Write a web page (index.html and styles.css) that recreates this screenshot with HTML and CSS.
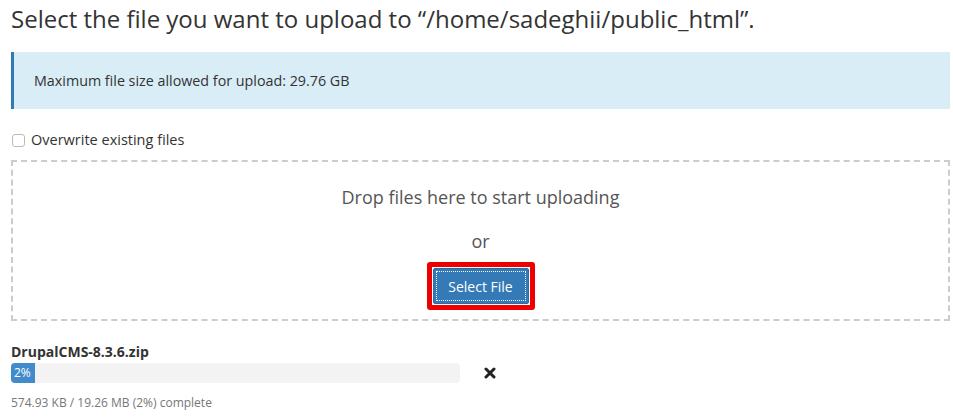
FILE: index.html
```html
<!DOCTYPE html>
<html>
<head>
<meta charset="utf-8">
<link rel="stylesheet" href="styles.css">
</head>
<body>
<div class="page">
  <h1 class="title">Select the file you want to upload to “/home/sadeghii/public_html”.</h1>
  <div class="info">Maximum file size allowed for upload: 29.76 GB</div>
  <label class="overwrite"><span class="checkbox"></span>Overwrite existing files</label>
  <div class="dropzone">
    <div class="drop-text">Drop files here to start uploading</div>
    <div class="or">or</div>
    <div class="highlight"><button class="select-btn"><span class="focus">Select File</span></button></div>
  </div>
  <div class="file">
    <div class="file-name">DrupalCMS-8.3.6.zip</div>
    <div class="progress-row">
      <div class="progress"><div class="bar" style="width:24px">2%</div></div>
      <svg class="cancel" width="12" height="12" viewBox="0 0 12 12"><path d="M2 2 L10 10 M10 2 L2 10" stroke="#222" stroke-width="3" stroke-linecap="round"/></svg>
    </div>
    <div class="status">574.93 KB / 19.26 MB (2%) complete</div>
  </div>
</div>
</body>
</html>
```
FILE: styles.css
```css
html, body { margin: 0; padding: 0; background: #fff; }
body { font-family: "Open Sans", "DejaVu Sans", sans-serif; color: #333; }
.page { padding: 0 3px 0 11px; }
.title { font-size: 24px; font-weight: 400; margin: 0; padding-top: 3px; line-height: 32px; color: #333; }
.info { margin-top: 17px; height: 57px; box-sizing: border-box; background: #d9edf7; border-left: 3px solid #2e7bb6; padding-left: 20px; font-size: 14.3px; display: flex; align-items: center; }
.overwrite { display: flex; align-items: center; margin-top: 22px; font-size: 14.5px; line-height: 20px; height: 18px; }
.checkbox { border: 1px solid #bbb; border-radius: 3px; margin-left: 1px; margin-right: 6px; background: #fff; box-sizing: border-box; width: 13px; height: 13px; }
.dropzone { margin-top: 11px; height: 161px; box-sizing: border-box; border: 2px dashed #ccc; display: flex; flex-direction: column; align-items: center; }
.drop-text { font-size: 18px; color: #555; margin-top: 22px; line-height: 26px; }
.or { font-size: 18px; color: #555; margin-top: 18px; line-height: 26px; }
.highlight { margin-top: 8px; border: 5px solid #e00; border-radius: 3px; padding: 1px; }
.select-btn { font-family: inherit; font-size: 14px; color: #fff; background: #337ab7; border: 1px solid #2e6da4; border-radius: 2px; padding: 2px; height: 36px; width: 96px; display: block; }
.focus { display: flex; align-items: center; justify-content: center; height: 100%; border: 1px dotted #fff; box-sizing: border-box; }
.file { margin-top: 22px; }
.file-name { font-size: 14px; font-weight: 700; line-height: 18px; }
.progress-row { display: flex; align-items: center; margin-top: 2px; }
.progress { width: 449px; height: 20px; background: #f3f3f3; border-radius: 4px; overflow: hidden; }
.bar { height: 100%; background: #428bca; color: #fff; font-size: 12px; line-height: 20px; padding-left: 3px; box-sizing: border-box; }
.cancel { margin-left: 24px; }
.status { font-size: 12px; color: #777; margin-top: 12px; line-height: 16px; }
```
